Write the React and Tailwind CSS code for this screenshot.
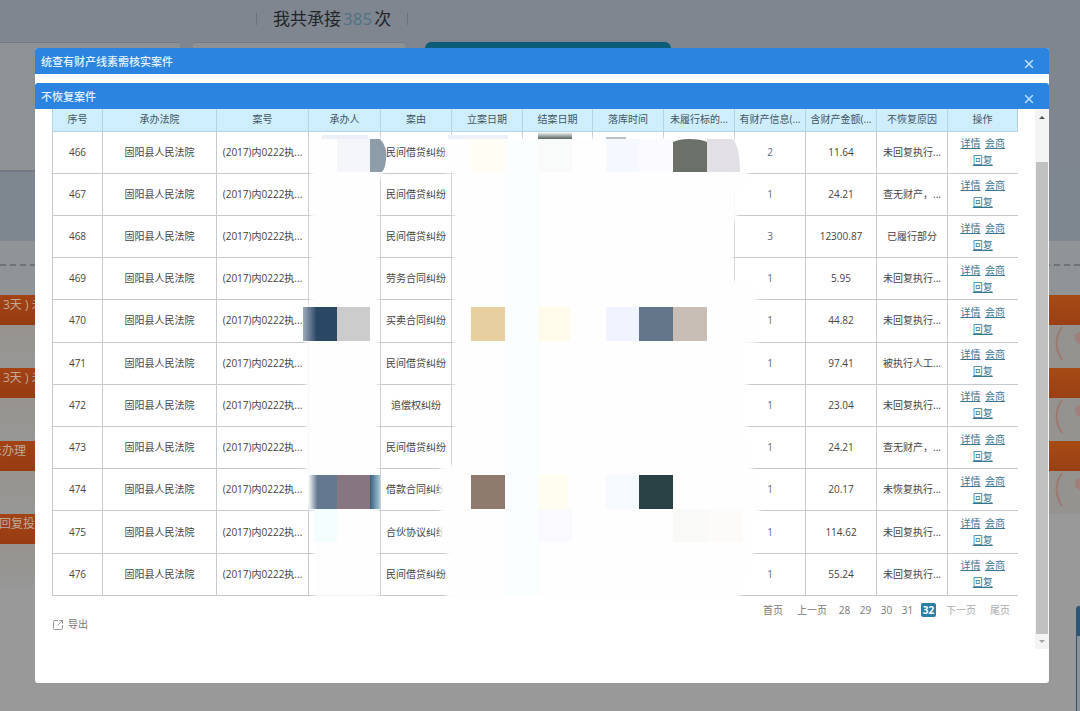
import React from 'react';
import { X, SquareArrowOutUpRight } from 'lucide-react';
import { clsx } from 'clsx';

const columns = [
  { label: '序号', width: 'w-[50px]' },
  { label: '承办法院', width: 'w-[114px]' },
  { label: '案号', width: 'w-[92px]' },
  { label: '承办人', width: 'w-[72px]' },
  { label: '案由', width: 'w-[71px]' },
  { label: '立案日期', width: 'w-[71px]' },
  { label: '结案日期', width: 'w-[70px]' },
  { label: '落库时间', width: 'w-[71px]' },
  { label: '未履行标的...', width: 'w-[71px]' },
  { label: '有财产信息(...', width: 'w-[71px]' },
  { label: '含财产金额(...', width: 'w-[71px]' },
  { label: '不恢复原因', width: 'w-[71px]' },
  { label: '操作', width: 'w-[70px]' },
];

const cases = [
  { id: 466, cause: '民间借贷纠纷', clues: 2, amount: '11.64', reason: '未回复执行...' },
  { id: 467, cause: '民间借贷纠纷', clues: 1, amount: '24.21', reason: '查无财产，...' },
  { id: 468, cause: '民间借贷纠纷', clues: 3, amount: '12300.87', reason: '已履行部分' },
  { id: 469, cause: '劳务合同纠纷', clues: 1, amount: '5.95', reason: '未回复执行...' },
  { id: 470, cause: '买卖合同纠纷', clues: 1, amount: '44.82', reason: '未回复执行...' },
  { id: 471, cause: '民间借贷纠纷', clues: 1, amount: '97.41', reason: '被执行人工...' },
  { id: 472, cause: '追偿权纠纷', clues: 1, amount: '23.04', reason: '未回复执行...' },
  { id: 473, cause: '民间借贷纠纷', clues: 1, amount: '24.21', reason: '查无财产，...' },
  { id: 474, cause: '借款合同纠纷', clues: 1, amount: '20.17', reason: '未恢复执行...' },
  { id: 475, cause: '合伙协议纠纷', clues: 1, amount: '114.62', reason: '未回复执行...' },
  { id: 476, cause: '民间借贷纠纷', clues: 1, amount: '55.24', reason: '未回复执行...' },
];

const pages = [28, 29, 30, 31, 32];

// x, y, width, height, fill
const mosaic = [
  [453, 30, 35, 457, '#fbfeff'],
  [285, 30, 33, 33, '#f5f6f9'],
  [419, 30, 34, 33, '#fffdf4'],
  [486, 30, 34, 33, '#f9fafa'],
  [554, 30, 33, 33, '#f5f8fe'],
  [587, 30, 34, 33, '#fbfbff'],
  [285, 198, 33, 34, '#cbcccb'],
  [419, 198, 34, 34, '#e7cf9f'],
  [486, 198, 32, 34, '#fffbea'],
  [554, 198, 33, 34, '#f1f3ff'],
  [587, 198, 34, 34, '#637589'],
  [621, 198, 34, 34, '#c9beb5'],
  [285, 366, 33, 34, '#87757f'],
  [419, 366, 34, 34, '#8f7b6d'],
  [486, 366, 30, 34, '#fffcf0'],
  [554, 366, 33, 34, '#f6faff'],
  [587, 366, 34, 34, '#2a4145'],
  [262, 400, 23, 33, '#f3fdfd'],
  [486, 400, 34, 33, '#f9f9ff'],
  [621, 400, 34, 33, '#f9f9f7'],
  [655, 400, 36, 33, '#fdfbfa'],
];

const PrivacyMask = () => (
  <svg
    aria-hidden="true"
    viewBox="0 0 965 487"
    preserveAspectRatio="none"
    className="pointer-events-none absolute inset-0 h-full w-full overflow-visible"
  >
    <defs>
      <filter id="soft" x="-10%" y="-10%" width="120%" height="120%">
        <feGaussianBlur stdDeviation="2" />
      </filter>
      <linearGradient id="fadeIn">
        <stop offset="0" stopColor="#2b4766" stopOpacity="0.45" />
        <stop offset="0.4" stopColor="#2b4766" />
      </linearGradient>
      <linearGradient id="slate">
        <stop offset="0" stopColor="#64788f" stopOpacity="0.1" />
        <stop offset="0.3" stopColor="#64788f" />
      </linearGradient>
      <linearGradient id="fadeOut">
        <stop offset="0" stopColor="#355d7c" />
        <stop offset="1" stopColor="#a9c9da" />
      </linearGradient>
      <linearGradient id="capTop" x2="0" y2="1">
        <stop offset="0" stopColor="#53635f" stopOpacity="0" />
        <stop offset="1" stopColor="#53635f" />
      </linearGradient>
    </defs>
    <g fill="#fefefe" filter="url(#soft)">
      <path d="M259 28H330V70H326V488H262V400H254V195H259Z" />
      <path d="M394 29H684V62H696V80H685V112H681V172H705V235H695V330H700V365H708V410H702V470H688V491H395V440H388V356H402V64H393Z" />
    </g>
    {mosaic.map(([x, y, w, h, fill]) => (
      <rect key={`${x}-${y}`} x={x} y={y} width={w} height={h} fill={fill} />
    ))}
    <path d="M318 30H328Q336 38 334 51Q333 60 330 63H318Z" fill="#8e9daa" />
    <path d="M621 63V33Q627 30 637 30Q649 30 655 33V63Z" fill="#6b7168" />
    <path d="M655 63V30H680Q688 36 688 63Z" fill="#e3e0e5" />
    <rect x="486" y="23" width="34" height="7" fill="url(#capTop)" />
    <rect x="396" y="26" width="60" height="4" fill="#edf0f8" />
    <rect x="270" y="26" width="46" height="4" fill="#eceff7" />
    <rect x="554" y="28" width="20" height="2" fill="#b9c3c2" />
    <rect x="251" y="198" width="34" height="34" fill="url(#fadeIn)" />
    <rect x="257" y="366" width="28" height="34" fill="url(#slate)" />
    <rect x="318" y="366" width="10" height="34" fill="url(#fadeOut)" />
  </svg>
);

const ActionLink = ({ children }) => (
  <a href="#" className="mx-px text-[#3a7795] underline">{children}</a>
);

const CaseTable = () => (
  <div className="relative">
    <table className="h-[487px] w-full table-fixed border-collapse text-center text-[10px] leading-[17px] text-[#444]">
      <colgroup>
        {columns.map((col) => <col key={col.label} className={col.width} />)}
      </colgroup>
      <thead>
        <tr className="h-[22px] bg-[#cfeefc] text-[#3f5564]">
          {columns.map((col) => (
            <th key={col.label} className="whitespace-nowrap border border-t-0 border-[#b4d3e3] p-0 font-normal">
              {col.label}
            </th>
          ))}
        </tr>
      </thead>
      <tbody>
        {cases.map((item) => (
          <tr key={item.id} className="h-[42px] border-b border-l border-[#c6cacc] *:border-r *:border-[#c6cacc] *:p-0 *:whitespace-nowrap">
            <td>{item.id}</td>
            <td>固阳县人民法院</td>
            <td>(2017)内0222执...</td>
            <td />
            <td>{item.cause}</td>
            <td />
            <td />
            <td />
            <td />
            <td className="text-[#60687c]">{item.clues}</td>
            <td>{item.amount}</td>
            <td>{item.reason}</td>
            <td className="border-r-0!">
              <ActionLink>详情</ActionLink> <ActionLink>会商</ActionLink>
              <br />
              <ActionLink>回复</ActionLink>
            </td>
          </tr>
        ))}
      </tbody>
    </table>
    <PrivacyMask />
  </div>
);

const Pagination = () => (
  <nav aria-label="分页" className="flex items-center justify-end gap-[6px] pr-[7px] text-[10px] leading-[14px] text-[#777]">
    <button type="button" className="mr-2">首页</button>
    <button type="button" className="mr-1">上一页</button>
    {pages.map((page) => (
      <button
        key={page}
        type="button"
        className={clsx('w-[15px] rounded-xs text-center', page === 32 && 'bg-[#2b7ea6] font-bold text-white')}
      >
        {page}
      </button>
    ))}
    <button type="button" className="ml-1 text-[#aaa]">下一页</button>
    <button type="button" className="ml-2 text-[#aaa]">尾页</button>
  </nav>
);

const ScrollBar = () => (
  <div className="flex w-[14px] shrink-0 flex-col items-center bg-[#f4f4f4]">
    <button type="button" aria-label="向上滚动" className="flex h-[17px] w-full items-center justify-center">
      <span className="border-x-3 border-b-3 border-x-transparent border-b-[#505050]" />
    </button>
    <div className="flex w-full grow px-px pt-9">
      <div className="grow bg-[#c1c1c1]" />
    </div>
    <button type="button" aria-label="向下滚动" className="flex h-[15px] w-full items-center justify-center">
      <span className="border-x-3 border-t-3 border-x-transparent border-t-[#a3a3a3]" />
    </button>
  </div>
);

const DialogHeader = ({ title }) => (
  <header className="flex h-[26px] items-center justify-between rounded-t-[3px] bg-[#2b84df] pt-[2px] pl-[6px] pr-[13px] text-white">
    <h2 className="text-[11px] leading-4 font-medium text-[#e6f4ff]">{title}</h2>
    <button type="button" aria-label="关闭" className="pt-1">
      <X className="h-[14px] w-[14px] text-[#bfe0fb]" strokeWidth={2.5} />
    </button>
  </header>
);

const Dialogs = () => (
  <div className="absolute inset-x-0 top-12 pr-[31px] pl-[35px]">
    <section className="rounded-[3px] bg-white">
      <DialogHeader title="统查有财产线素需核实案件" />
      <section className="pt-[9px]">
        <DialogHeader title="不恢复案件" />
        <div className="flex pb-[34px]">
          <div className="min-w-0 grow pr-[18px] pb-[18px] pl-[17px]">
            <CaseTable />
            <div className="pt-[7px]">
              <Pagination />
            </div>
            <button type="button" className="flex items-center gap-1 text-[10px] leading-[14px] text-[#777]">
              <SquareArrowOutUpRight className="mt-[2px] h-3 w-3 text-[#999]" strokeWidth={2} />
              导出
            </button>
          </div>
          <ScrollBar />
        </div>
      </section>
    </section>
  </div>
);

const Stamp = () => (
  <svg viewBox="0 0 31 43" className="h-[43px] w-[31px]" fill="none" aria-hidden="true">
    <path d="M13 2Q2 18 13 35" stroke="#9c7a73" strokeWidth="2" />
    <path d="M31 7Q24 8 26 14Q27 18 31 19Z" fill="#a17f7a" />
  </svg>
);

const notices = ['3天 ) 未', '3天 ) 未', '未办理', '未回复投'];

const PageBehind = () => (
  <div className="min-h-screen bg-[#999]" aria-hidden="true">
    <div className="flex h-[42px] items-center bg-[#80868f] pb-1 pl-64 text-[17px] text-[#20252a]">
      <p className="flex items-center gap-[2px] border-x border-[#6c737c] px-4 leading-3">
        我共承接<span className="text-[#4e7083]">385</span>次
      </p>
    </div>
    <div className="flex h-[130px] bg-[#80868f]">
      <div className="w-[180px] rounded-tr-[3px] border-t border-b-2 border-[#747a84] bg-[#8f9295]" />
      <div className="ml-[13px] w-[212px] rounded-t-[3px] border-t border-[#747a84] bg-[#8f9295]" />
      <div className="ml-5 w-[246px] rounded-t-[6px] bg-[#0d5c7a]" />
    </div>
    <div className="h-[69px] bg-[#7e8690]" />
    <div className="h-[54px] bg-[#909496] pt-[23px]">
      <div className="border-t-2 border-dashed border-[#6c7476]" />
    </div>
    <div className="flex justify-between">
      <div className="w-[35px]">
        {notices.map((text, index) => (
          <div key={index} className="h-[73px] bg-linear-to-b from-[#97918b] to-[#979795]">
            <p className={clsx(
              'flex h-[30px] overflow-hidden bg-linear-to-b from-[#a34314] to-[#973b12] pt-[2px] text-[12px] leading-4 whitespace-nowrap text-[#bda99b]',
              index < 2 ? 'justify-start pl-[3px]' : index === 2 ? 'justify-end pr-[9px]' : 'justify-end',
            )}>
              {text}
            </p>
          </div>
        ))}
      </div>
      <div className="w-[31px]">
        {[0, 1, 2].map((index) => (
          <div key={index} className="bg-[#95938f]">
            <div className="h-[30px] bg-linear-to-b from-[#a64a14] to-[#9a4015]" />
            <Stamp />
          </div>
        ))}
      </div>
    </div>
  </div>
);

export default function App() {
  return (
    <div className="relative min-h-screen overflow-hidden font-['Open_Sans','Noto_Sans_CJK_SC',sans-serif]">
      <PageBehind />
      <aside className="absolute right-0 bottom-0 h-[105px] w-1 rounded-tl-[3px] border-t-[30px] border-l border-[#2f5577] bg-[#8b9299]" />
      <Dialogs />
    </div>
  );
}
